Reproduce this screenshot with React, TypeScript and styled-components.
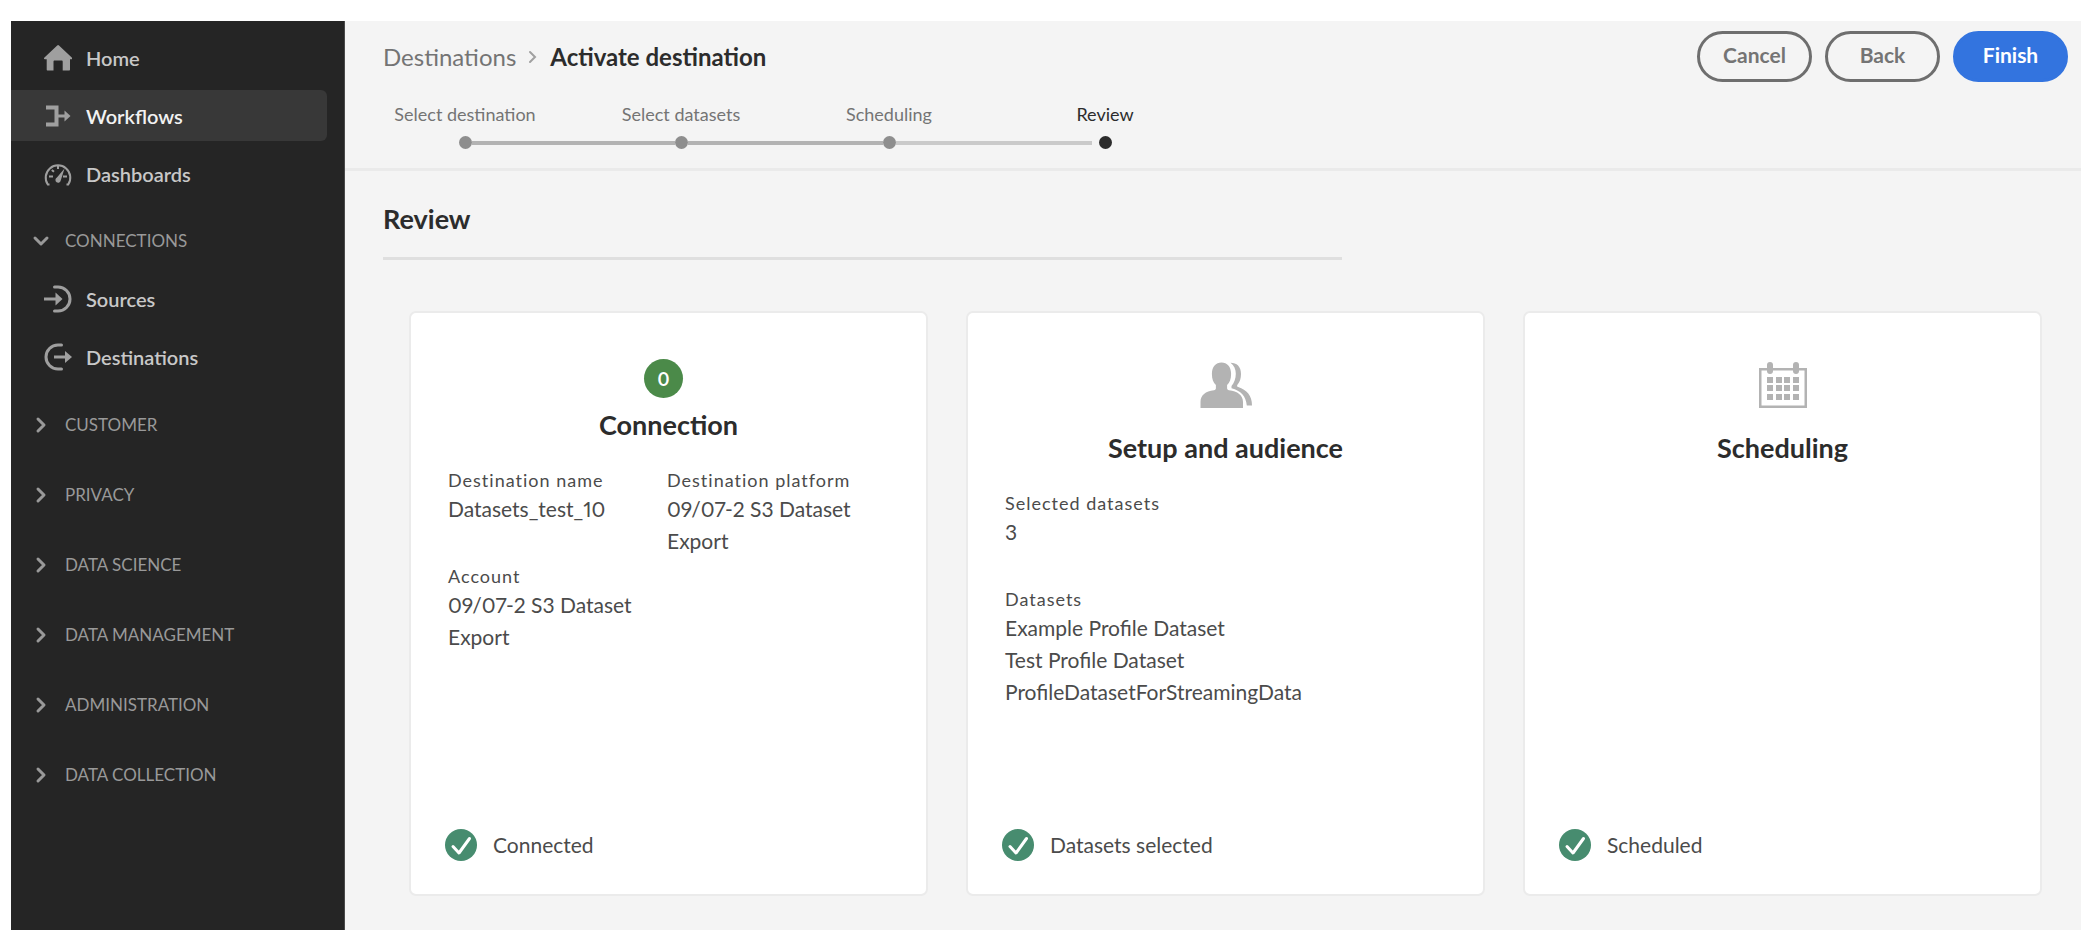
import React from "react";
import styled, { createGlobalStyle } from "styled-components";

const GlobalStyle = createGlobalStyle`
  *, *::before, *::after { box-sizing: border-box; }
  body {
    margin: 0;
    background: #ffffff;
    color: #4b4b4b;
    font-family: Lato, "Open Sans", sans-serif;
    font-size: 21px;
    font-variant-numeric: proportional-nums;
    line-height: 32px;
  }
  h1, h2, p, ol, ul, dl, dd { margin: 0; padding: 0; }
  ol, ul { list-style: none; }
  button { font: inherit; cursor: pointer; }
`;

const Page = styled.div`
  display: flex;
  min-height: 100vh;
  padding: 21px 15px 0 11px;
`;

const Sidebar = styled.aside`
  flex: 0 0 334px;
  background: #252525;
  border-right: 1px solid #4a4a4a;
`;

const NavList = styled.ul`
  display: flex;
  flex-direction: column;
  gap: 7px;
  padding-top: 11px;
`;

const NavLink = styled.a<{ $active?: boolean }>`
  display: flex;
  align-items: center;
  gap: 14px;
  height: 51px;
  margin-right: 17px;
  padding-left: 33px;
  border-radius: 0 6px 6px 0;
  background: ${(p) => (p.$active ? "#383838" : "transparent")};
  color: ${(p) => (p.$active ? "#f2f2f2" : "#c8c8c8")};
  font-size: 20px;
  font-weight: 600;
  text-decoration: none;
  svg { flex: none; color: #9f9f9f; }
`;

const Sections = styled.div`
  padding-top: 24px;
`;

const Section = styled.section`
  min-height: 70px;
`;

const SectionToggle = styled.button`
  display: flex;
  align-items: center;
  gap: 15px;
  width: 100%;
  height: 36px;
  padding: 0 0 0 21px;
  border: 0;
  background: none;
  color: #999999;
  && { font-size: 17px; }
  text-align: left;
  text-transform: uppercase;
`;

const SectionLinks = styled(NavList)`
  padding: 14px 0 25px;
`;

const Main = styled.main`
  flex: 1;
  min-width: 0;
  background: #f4f4f4;
`;

const Header = styled.header`
  display: flex;
  justify-content: space-between;
  align-items: flex-start;
  height: 150px;
  padding: 10px 13px 0 38px;
  border-bottom: 3px solid #eaeaea;
`;

const Crumbs = styled.nav`
  display: flex;
  align-items: center;
  gap: 12px;
  height: 52px;
  color: #2c2c2c;
  font-size: 24px;
  a { color: #747474; text-decoration: none; }
  strong { font-weight: 700; }
  svg { color: #a0a0a0; }
`;

const Steps = styled.ol`
  display: flex;
  margin-left: -30px;
  padding-top: 19px;
`;

const Step = styled.li<{ $current?: boolean }>`
  display: flex;
  flex-direction: column;
  align-items: center;
  gap: 10px;
  width: 208px;
  color: ${(p) => (p.$current ? "#2c2c2c" : "#747474")};
  font-size: 18px;
  line-height: 24px;
  &:first-child, &:last-child { width: 224px; }
`;

const Track = styled.span<{ $before: string; $after: string; $gap: number }>`
  display: flex;
  align-items: center;
  gap: ${(p) => p.$gap}px;
  width: 100%;
  height: 13px;
  &::before, &::after { content: ""; flex: 1; height: 4px; }
  &::before { background: ${(p) => p.$before}; }
  &::after { background: ${(p) => p.$after}; }
`;

const Dot = styled.i<{ $current?: boolean }>`
  width: 13px;
  height: 13px;
  border-radius: 50%;
  background: ${(p) => (p.$current ? "#2c2c2c" : "#8e8e8e")};
`;

const Actions = styled.div`
  display: flex;
  gap: 13px;
`;

const Pill = styled.button<{ $primary?: boolean }>`
  min-width: 115px;
  height: 51px;
  padding: 0 16px 3px;
  border: 3px solid ${(p) => (p.$primary ? "#3374df" : "#6e6e6e")};
  border-radius: 26px;
  background: ${(p) => (p.$primary ? "#3374df" : "transparent")};
  color: ${(p) => (p.$primary ? "#ffffff" : "#747474")};
  && { font-weight: 700; }
`;

const Body = styled.div`
  padding: 31px 39px 34px 38px;
`;

const Title = styled.h1`
  width: 959px;
  max-width: 100%;
  height: 58px;
  border-bottom: 3px solid #dfdfdf;
  color: #2c2c2c;
  font-size: 27px;
  line-height: 34px;
`;

const Cards = styled.div`
  display: grid;
  grid-template-columns: repeat(3, 1fr);
  gap: 38px;
  padding: 51px 0 0 26px;
`;

const Card = styled.section`
  display: flex;
  flex-direction: column;
  min-height: 585px;
  padding: 46px 37px 33px;
  border: 2px solid #ebebeb;
  border-radius: 7px;
  background: #ffffff;
`;

const CardHead = styled.div<{ $tall?: boolean }>`
  display: flex;
  flex-direction: column;
  align-items: center;
  gap: ${(p) => (p.$tall ? "18px" : "10px")};
  padding-bottom: 25px;
  h2 {
    color: #2c2c2c;
    font-size: 27px;
    line-height: 34px;
  }
`;

const Badge = styled.span`
  display: flex;
  align-items: center;
  justify-content: center;
  width: 39px;
  height: 39px;
  margin-right: 10px;
  border-radius: 50%;
  background: #4b8a49;
  color: #ffffff;
  font-size: 18px;
  font-weight: 700;
`;

const Fields = styled.dl<{ $columns: number }>`
  display: grid;
  grid-template-columns: repeat(${(p) => p.$columns}, 195px);
  column-gap: 24px;
  row-gap: 6px;
`;

const Field = styled.div<{ $tall?: boolean }>`
  min-height: ${(p) => (p.$tall ? "90px" : "0")};
  white-space: nowrap;
  dt {
    font-size: 18px;
    line-height: 26px;
    letter-spacing: 1px;
  }
`;

const Status = styled.p`
  display: flex;
  align-items: center;
  gap: 16px;
  margin-top: auto;
  margin-left: -3px;
`;

const Svg = ({ children }: { children: React.ReactNode }) => (
  <svg width="28" height="28" viewBox="0 0 28 28" fill="none" stroke="currentColor" aria-hidden="true">
    {children}
  </svg>
);

const HomeIcon = () => (
  <Svg>
    <path stroke="none" fill="currentColor" d="M13.2 1.4a1.400 1.400 0 0 1 1.800 0L28 13.800c.5.6.2 1.400-.6 1.400H26v10.300c0 .6-.4 1-1 1h-6.300v-8.800c0-.7-.4-1.100-1.100-1.100h-7c-.7 0-1.100.4-1.100 1.100v8.800H3.700c-.6 0-1-.4-1-1V15.200H.8c-.8 0-1.100-.8-.6-1.400z" />
  </Svg>
);

const WorkflowIcon = () => (
  <Svg>
    <path strokeWidth="4" d="M2 5.500h10.500v17H2" />
    <path strokeWidth="3" d="M12 14h10" />
    <path stroke="none" fill="currentColor" d="M20.500 8.500v11L26.500 14z" />
  </Svg>
);

const DashboardIcon = () => (
  <Svg>
    <path strokeWidth="2" d="M5.500 24.500H3.800A12.300 12.300 0 1 1 24.200 24.500H22.500" />
    <path strokeWidth="2" d="M14 5v4M5 16.500h4M19 16.500h4M7.800 10l2.200 1.800" />
    <path stroke="none" fill="currentColor" d="M20.500 8.500 16.800 20.200a2.700 2.700 0 1 1-3.900-2.600z" />
  </Svg>
);

const SourceIcon = () => (
  <Svg>
    <path strokeWidth="3" strokeLinecap="round" d="M10.500 2h3.500a12 12 0 0 1 0 24h-3.500" />
    <path strokeWidth="3" d="M0 14h12" />
    <path stroke="none" fill="currentColor" d="M11.500 7.500v13L18.500 14z" />
  </Svg>
);

const DestinationIcon = () => (
  <Svg>
    <path strokeWidth="3" strokeLinecap="round" d="M17.500 2h-3.500a12 12 0 0 0 0 24h3.500" />
    <path strokeWidth="3" d="M10 14h12" />
    <path stroke="none" fill="currentColor" d="M21 8v12L28 14z" />
  </Svg>
);

const Chevron = ({ open = false }: { open?: boolean }) => (
  <svg width="18" height="18" viewBox="0 0 18 18" fill="none" stroke="currentColor" strokeWidth="3" strokeLinecap="round" strokeLinejoin="round" aria-hidden="true">
    <path d={open ? "M3 6l6 6 6-6" : "M6 3l6 6-6 6"} />
  </svg>
);

const CrumbChevron = () => (
  <svg width="10" height="14" viewBox="0 0 10 14" fill="none" stroke="currentColor" strokeWidth="2" strokeLinecap="round" aria-hidden="true">
    <path d="M2 2l5 5-5 5" />
  </svg>
);

const PeopleIcon = () => (
  <svg width="54" height="54" viewBox="0 0 54 54" fill="#b3b3b3" aria-hidden="true">
    <path d="M22.500 3.500c-5.600 0-9.600 4-9.600 11.200 0 5.200 1.400 9 4 11.300v3.300c0 1.100-.7 1.700-1.900 2C6.500 32 1.500 36.500 1.500 43v6h42.500v-6c0-6.500-5.500-11-14-11.700-1.200-.3-1.900-.9-1.900-2V26c2.600-2.300 4-6.100 4-11.300 0-7.200-4-11.200-9.600-11.200z" />
    <path d="M31.500 3.800c6.300 0 10.500 3.900 10.500 11.100 0 4.700-1.300 8.100-3.400 10.600-.9 1.200-.5 2.300.6 2.600C47.700 31 53 36.500 53 46.500h-5.200c-.8-9.500-5.900-14.700-15.300-17.300v-2.300c2.700-3.200 4.300-7.200 4.300-12.200 0-4.500-1.700-8.300-5.300-10.900z" />
  </svg>
);

const CalendarIcon = () => (
  <svg width="54" height="54" viewBox="0 0 54 54" fill="#b3b3b3" aria-hidden="true">
    <path fillRule="evenodd" d="M3 9h48v40H3zm2.500 2.500v35h43v-35z" />
    <rect x="11" y="3" width="6" height="12" rx="3" />
    <rect x="37" y="3" width="6" height="12" rx="3" />
    {[18, 26, 35].map((y) => [11, 20, 28, 37].map((x) => <rect key={`${x}-${y}`} x={x} y={y} width="6" height="6" />))}
  </svg>
);

const CheckIcon = () => (
  <svg width="32" height="32" viewBox="0 0 32 32" aria-hidden="true">
    <circle cx="16" cy="16" r="16" fill="#478c6f" />
    <path d="M8 17.500l6 6.500L24.500 9.500" fill="none" stroke="#ffffff" strokeWidth="3" strokeLinecap="round" strokeLinejoin="round" />
  </svg>
);

const closedSections = ["Customer", "Privacy", "Data science", "Data management", "Administration", "Data collection"];

const done = "#b3b3b3";
const pending = "#cacaca";

const steps = [
  { label: "Select destination", before: "transparent", after: done },
  { label: "Select datasets", before: done, after: done },
  { label: "Scheduling", before: done, after: pending },
  { label: "Review", before: pending, after: "transparent", current: true },
];

export default function App() {
  return (
    <>
      <GlobalStyle />
      <Page>
        <Sidebar>
          <nav aria-label="Primary">
            <NavList>
              <li><NavLink href="#home"><HomeIcon />Home</NavLink></li>
              <li><NavLink href="#workflows" $active aria-current="page"><WorkflowIcon />Workflows</NavLink></li>
              <li><NavLink href="#dashboards"><DashboardIcon />Dashboards</NavLink></li>
            </NavList>
            <Sections>
              <Section>
                <SectionToggle type="button" aria-expanded="true"><Chevron open />Connections</SectionToggle>
                <SectionLinks>
                  <li><NavLink href="#sources"><SourceIcon />Sources</NavLink></li>
                  <li><NavLink href="#destinations"><DestinationIcon />Destinations</NavLink></li>
                </SectionLinks>
              </Section>
              {closedSections.map((name) => (
                <Section key={name}>
                  <SectionToggle type="button" aria-expanded="false"><Chevron />{name}</SectionToggle>
                </Section>
              ))}
            </Sections>
          </nav>
        </Sidebar>
        <Main>
          <Header>
            <div>
              <Crumbs aria-label="Breadcrumb">
                <a href="#destinations">Destinations</a>
                <CrumbChevron />
                <strong>Activate destination</strong>
              </Crumbs>
              <Steps>
                {steps.map(({ label, before, after, current }) => (
                  <Step key={label} $current={current} aria-current={current ? "step" : undefined}>
                    {label}
                    <Track $before={before} $after={after} $gap={current ? 7 : 0}>
                      <Dot $current={current} />
                    </Track>
                  </Step>
                ))}
              </Steps>
            </div>
            <Actions>
              <Pill type="button">Cancel</Pill>
              <Pill type="button">Back</Pill>
              <Pill type="button" $primary>Finish</Pill>
            </Actions>
          </Header>
          <Body>
            <Title>Review</Title>
            <Cards>
              <Card>
                <CardHead><Badge>0</Badge><h2>Connection</h2></CardHead>
                <Fields $columns={2}>
                  <Field><dt>Destination name</dt><dd>Datasets_test_10</dd></Field>
                  <Field><dt>Destination platform</dt><dd>09/07-2 S3 Dataset<br />Export</dd></Field>
                  <Field><dt>Account</dt><dd>09/07-2 S3 Dataset<br />Export</dd></Field>
                </Fields>
                <Status><CheckIcon />Connected</Status>
              </Card>
              <Card>
                <CardHead $tall><PeopleIcon /><h2>Setup and audience</h2></CardHead>
                <Fields $columns={1}>
                  <Field $tall><dt>Selected datasets</dt><dd>3</dd></Field>
                  <Field><dt>Datasets</dt><dd>Example Profile Dataset</dd><dd>Test Profile Dataset</dd><dd>ProfileDatasetForStreamingData</dd></Field>
                </Fields>
                <Status><CheckIcon />Datasets selected</Status>
              </Card>
              <Card>
                <CardHead $tall><CalendarIcon /><h2>Scheduling</h2></CardHead>
                <Status><CheckIcon />Scheduled</Status>
              </Card>
            </Cards>
          </Body>
        </Main>
      </Page>
    </>
  );
}
